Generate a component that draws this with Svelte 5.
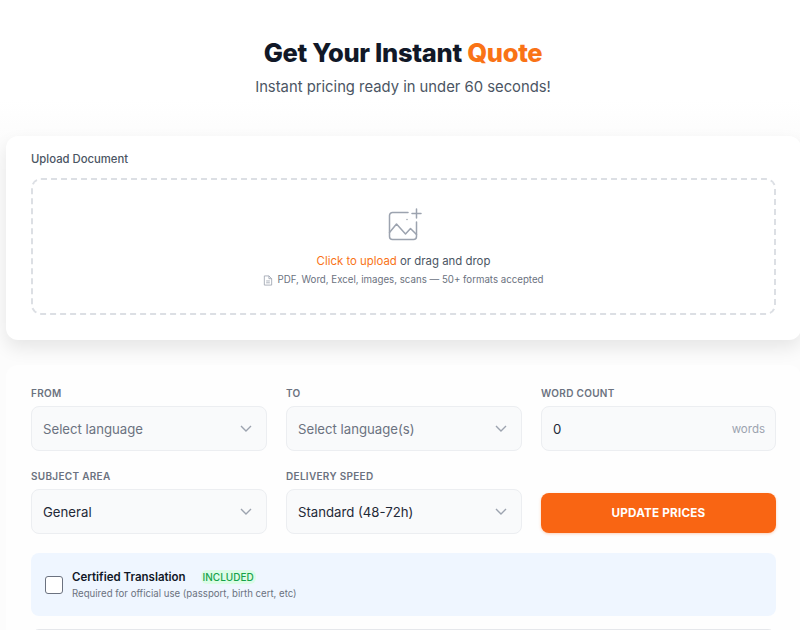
<script>
    const fromLabel = "Select language";
    const toLabel = "Select language(s)";
</script>

<div class="page">
    <header class="hero">
        <h1>Get Your Instant <span>Quote</span></h1>
        <p>Instant pricing ready in under 60 seconds!</p>
    </header>

    <section class="card upload">
        <div class="upload-label">Upload Document</div>
        <div class="dropzone">
            <svg class="img-icon" width="34" height="34" viewBox="0 0 34 34" fill="none" stroke="#9ca3af" stroke-width="1.5" stroke-linecap="round" stroke-linejoin="round">
                <path d="M20 4.5H4.5a3 3 0 0 0-3 3v21a3 3 0 0 0 3 3h21a3 3 0 0 0 3-3V14" />
                <path d="M1.5 24.5l7-8.5 9 10 5-5.500 6 6" />
                <path d="M28.500 1v9M24 5.500h9" />
                <path d="M19 11.500h.01" />
            </svg>
            <div class="drop-text"><span>Click to upload</span> or drag and drop</div>
            <div class="drop-hint">
                <svg width="10" height="11" viewBox="0 0 10 12" fill="none" stroke="#9ca3af" stroke-width="0.9">
                    <path d="M1 1h5l3 3v7H1zM6 1v3h3M3 6.500h4M3 8.500h4" />
                </svg>
                PDF, Word, Excel, images, scans — 50+ formats accepted
            </div>
        </div>
    </section>

    <section class="card form">
        <div class="grid">
            <div class="field">
                <div class="label">FROM</div>
                <div class="control placeholder">
                    {fromLabel}
                    <svg class="chev" width="12" height="7" viewBox="0 0 12 7" fill="none" stroke="#9ca3af" stroke-width="1.400"><path d="M1 1l5 5 5-5" /></svg>
                </div>
            </div>
            <div class="field">
                <div class="label">TO</div>
                <div class="control placeholder">
                    {toLabel}
                    <svg class="chev" width="12" height="7" viewBox="0 0 12 7" fill="none" stroke="#9ca3af" stroke-width="1.400"><path d="M1 1l5 5 5-5" /></svg>
                </div>
            </div>
            <div class="field">
                <div class="label">WORD COUNT</div>
                <div class="control count">
                    0
                    <span class="unit">words</span>
                </div>
            </div>
            <div class="field">
                <div class="label">SUBJECT AREA</div>
                <div class="control">
                    General
                    <svg class="chev" width="12" height="7" viewBox="0 0 12 7" fill="none" stroke="#9ca3af" stroke-width="1.400"><path d="M1 1l5 5 5-5" /></svg>
                </div>
            </div>
            <div class="field">
                <div class="label">DELIVERY SPEED</div>
                <div class="control">
                    Standard (48-72h)
                    <svg class="chev" width="12" height="7" viewBox="0 0 12 7" fill="none" stroke="#9ca3af" stroke-width="1.400"><path d="M1 1l5 5 5-5" /></svg>
                </div>
            </div>
            <button class="update">UPDATE PRICES</button>
        </div>

        <div class="certified">
            <div class="check"></div>
            <div>
                <div class="cert-title">Certified Translation <span class="badge">INCLUDED</span></div>
                <div class="cert-sub">Required for official use (passport, birth cert, etc)</div>
            </div>
        </div>
        <div class="next"></div>
    </section>
</div>

<style>
    :global(body) {
        margin: 0;
        overflow: hidden;
    }

    .page {
        height: 630px;
        overflow: hidden;
        background: linear-gradient(#fff 0, #fff 100px, #fcfcfc 140px);
        font-family: Inter, "Liberation Sans", sans-serif;
    }

    .hero {
        text-align: center;
        padding: 36px 0 0 6px;
        height: 100px;
        box-sizing: border-box;
    }

    h1 {
        margin: 0;
        font-weight: 800;
        font-size: 25.5px;
        line-height: 34px;
        letter-spacing: -0.3px;
        color: #111827;
    }

    h1 span {
        color: #f97316;
    }

    .hero p {
        margin: 5px 0 0;
        font-size: 14.8px;
        line-height: 24px;
        color: #4b5563;
    }

    .card {
        margin-left: 6px;
        width: 795px;
        box-sizing: border-box;
        padding: 0 25px;
        background: #fff;
        border-radius: 12px;
    }

    .upload {
        margin-top: 36px;
        height: 204px;
        padding-top: 14px;
        box-shadow: 0 8px 18px rgba(0, 0, 0, 0.09);
    }

    .upload-label {
        font-size: 11.3px;
        line-height: 18px;
        font-weight: 500;
        color: #4b5563;
        margin-bottom: 10px;
    }

    .dropzone {
        height: 137px;
        box-sizing: border-box;
        border: 2px dashed #dcdfe4;
        border-radius: 10px;
        display: flex;
        flex-direction: column;
        align-items: center;
        padding-top: 28px;
    }

    .img-icon {
        margin-left: 3px;
    }

    .drop-text {
        margin-top: 10px;
        font-size: 11.4px;
        line-height: 18px;
        color: #4b5563;
    }

    .drop-text span {
        color: #f97316;
    }

    .drop-hint {
        margin-top: 2px;
        font-size: 9.7px;
        line-height: 16px;
        color: #6b7280;
        display: flex;
        align-items: center;
        gap: 4px;
    }

    .form {
        margin-top: 25px;
        padding-top: 21px;
        height: 300px;
        background: #fefefe;
    }

    .grid {
        display: grid;
        grid-template-columns: 236px 236px 235px;
        column-gap: 19px;
        row-gap: 18px;
    }

    .label {
        font-size: 10px;
        line-height: 14px;
        font-weight: 600;
        letter-spacing: 0.3px;
        color: #6b7280;
        margin-bottom: 6px;
    }

    .control {
        height: 45px;
        box-sizing: border-box;
        padding: 0 10px 0 11px;
        display: flex;
        align-items: center;
        justify-content: space-between;
        background: #f9fafb;
        border: 1px solid #eceef1;
        border-radius: 8px;
        font-size: 13.2px;
        color: #1f2937;
    }

    .placeholder {
        color: #6b7280;
    }

    .chev {
        margin-right: 4px;
    }

    .unit {
        font-size: 11.5px;
        color: #9ca3af;
    }

    .update {
        align-self: end;
        height: 40px;
        margin-bottom: 1px;
        border: 0;
        border-radius: 8px;
        background: #f96513;
        color: #fff;
        font-family: inherit;
        font-size: 11.7px;
        font-weight: 700;
        letter-spacing: 0.2px;
        box-shadow: 0 1px 3px rgba(249, 101, 19, 0.3);
    }

    .certified {
        margin-top: 19px;
        height: 63px;
        box-sizing: border-box;
        padding-left: 14px;
        display: flex;
        align-items: center;
        gap: 9px;
        background: #eff6ff;
        border-radius: 8px;
    }

    .check {
        width: 16px;
        height: 16px;
        background: #fff;
        border: 1px solid #6b7280;
        border-radius: 3px;
    }

    .cert-title {
        font-size: 11.5px;
        line-height: 16px;
        font-weight: 600;
        color: #111827;
    }

    .badge {
        margin-left: 12px;
        padding: 1px 2px;
        font-size: 10px;
        font-weight: 500;
        color: #16a34a;
        background: #dcfce7;
        border-radius: 6px;
    }

    .cert-sub {
        margin-top: 2px;
        font-size: 9.65px;
        line-height: 14px;
        color: #6b7280;
    }

    .next {
        margin-top: 13px;
        height: 40px;
        border: 1px solid #e5e7eb;
        border-radius: 8px;
    }
</style>
